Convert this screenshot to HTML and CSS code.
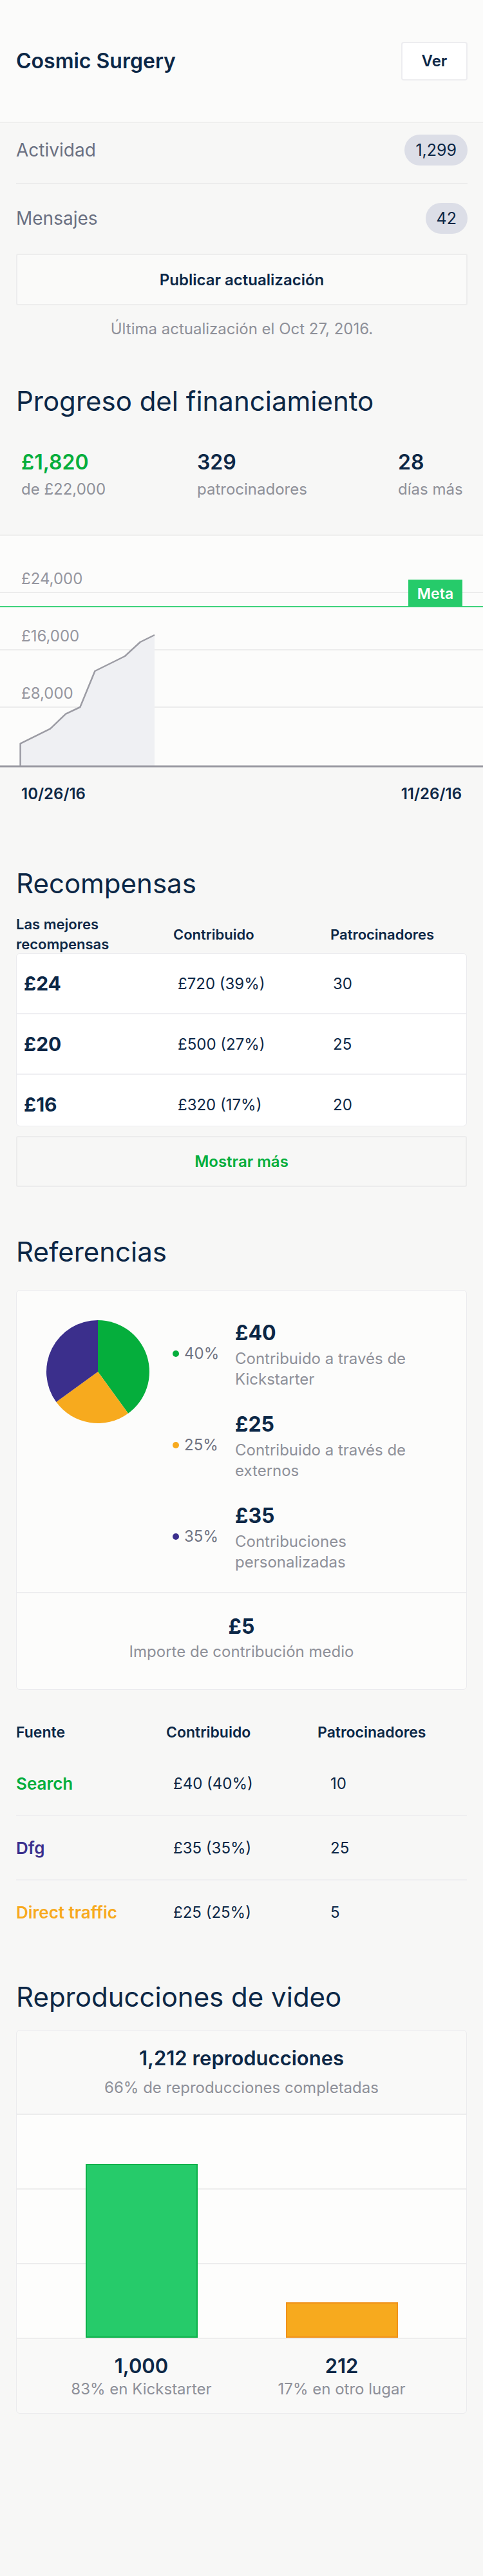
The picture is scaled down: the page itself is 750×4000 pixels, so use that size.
FILE: index.html
```html
<!DOCTYPE html>
<html lang="es">
<head>
<meta charset="utf-8">
<title>Cosmic Surgery</title>
<link rel="stylesheet" href="styles.css">
</head>
<body>
<header class="top">
  <h1 class="title">Cosmic Surgery</h1>
  <button class="btn-ver">Ver</button>
</header>

<section class="summary">
  <div class="stat stat-first"><span class="stat-label">Actividad</span><span class="badge">1,299</span></div>
  <div class="stat stat-second"><span class="stat-label">Mensajes</span><span class="badge">42</span></div>
  <button class="btn-wide">Publicar actualización</button>
  <p class="updated">Última actualización el Oct 27, 2016.</p>
</section>

<h2 class="section-title t-progress">Progreso del financiamiento</h2>
<div class="funding-stats">
  <div><div class="fs-value green">£1,820</div><div class="fs-label">de £22,000</div></div>
  <div><div class="fs-value">329</div><div class="fs-label">patrocinadores</div></div>
  <div><div class="fs-value">28</div><div class="fs-label">días más</div></div>
</div>
<div class="funding-chart">
  <svg class="chart-svg" width="750" height="360" viewBox="0 0 750 360">
    <line x1="0" y1="88" x2="750" y2="88" class="grid"/>
    <line x1="0" y1="177" x2="750" y2="177" class="grid"/>
    <line x1="0" y1="266" x2="750" y2="266" class="grid"/>
    <polygon points="31.6,358 31.6,322.6 78,299.6 102,276.6 124.4,266 147.4,210 193.8,187 217.7,165 240,154 240,358" class="area"/>
    <polyline points="31.6,358 31.6,322.6 78,299.6 102,276.6 124.4,266 147.4,210 193.8,187 217.7,165 240,154" class="area-line"/>
    <line x1="0" y1="110" x2="750" y2="110" class="goal"/>
    <rect x="634" y="68" width="84" height="42" class="goal-box"/>
    <text x="676" y="98" text-anchor="middle" class="goal-text">Meta</text>
    <text x="33" y="75" class="axis-label">£24,000</text>
    <text x="33" y="164" class="axis-label">£16,000</text>
    <text x="33" y="253" class="axis-label">£8,000</text>
    <line x1="0" y1="358" x2="750" y2="358" class="axis"/>
  </svg>
</div>
<div class="dates"><span>10/26/16</span><span>11/26/16</span></div>

<h2 class="section-title t-rewards">Recompensas</h2>
<div class="rewards-head">
  <div>Las mejores<br>recompensas</div>
  <div>Contribuido</div>
  <div>Patrocinadores</div>
</div>
<div class="rewards-card">
  <div class="reward-row"><span class="reward-amt">£24</span><span class="reward-val">£720 (39%)</span><span class="reward-val">30</span></div>
  <div class="reward-row"><span class="reward-amt">£20</span><span class="reward-val">£500 (27%)</span><span class="reward-val">25</span></div>
  <div class="reward-row"><span class="reward-amt">£16</span><span class="reward-val">£320 (17%)</span><span class="reward-val">20</span></div>
</div>
<div class="wrap"><button class="btn-more">Mostrar más</button></div>

<h2 class="section-title t-refs">Referencias</h2>
<div class="ref-card">
  <div class="ref-top">
    <svg class="pie" width="160" height="160" viewBox="0 0 160 160">
      <path d="M80,80 L80,0 A80,80 0 0 1 127.02,144.72 Z" fill="#05ae3c"/>
      <path d="M80,80 L127.02,144.72 A80,80 0 0 1 15.28,127.02 Z" fill="#f7aa1e"/>
      <path d="M80,80 L15.28,127.02 A80,80 0 0 1 80,0 Z" fill="#3b2f8c"/>
    </svg>
    <div class="legend">
      <div class="legend-item">
        <div class="legend-pct"><span class="dot dot-green"></span>40%</div>
        <div class="legend-text"><div class="legend-amt">£40</div><div class="legend-desc">Contribuido a través de Kickstarter</div></div>
      </div>
      <div class="legend-item">
        <div class="legend-pct"><span class="dot dot-orange"></span>25%</div>
        <div class="legend-text"><div class="legend-amt">£25</div><div class="legend-desc">Contribuido a través de externos</div></div>
      </div>
      <div class="legend-item">
        <div class="legend-pct"><span class="dot dot-purple"></span>35%</div>
        <div class="legend-text"><div class="legend-amt">£35</div><div class="legend-desc">Contribuciones personalizadas</div></div>
      </div>
    </div>
  </div>
  <div class="ref-bottom">
    <div class="legend-amt">£5</div>
    <div class="legend-desc">Importe de contribución medio</div>
  </div>
</div>

<div class="src-head">
  <div>Fuente</div>
  <div>Contribuido</div>
  <div>Patrocinadores</div>
</div>
<div class="src-table">
  <div class="src-row"><span class="src-name green">Search</span><span class="src-val">£40 (40%)</span><span class="src-val">10</span></div>
  <div class="src-row"><span class="src-name purple">Dfg</span><span class="src-val">£35 (35%)</span><span class="src-val">25</span></div>
  <div class="src-row"><span class="src-name orange">Direct traffic</span><span class="src-val">£25 (25%)</span><span class="src-val">5</span></div>
</div>

<h2 class="section-title t-video">Reproducciones de video</h2>
<div class="video-card">
  <div class="video-head">
    <div class="video-total">1,212 reproducciones</div>
    <div class="video-sub">66% de reproducciones completadas</div>
  </div>
  <div class="video-chart">
    <div class="band"><div class="bar bar-green" style="height:270px"></div></div>
    <div class="band"><div class="bar bar-orange" style="height:55px"></div></div>
  </div>
  <div class="video-foot">
    <div class="band-label"><div class="vf-num">1,000</div><div class="vf-label">83% en Kickstarter</div></div>
    <div class="band-label"><div class="vf-num">212</div><div class="vf-label">17% en otro lugar</div></div>
  </div>
</div>
</body>
</html>
```

FILE: styles.css
```css
* { box-sizing: border-box; }
html { background: #f7f7f6; }
body {
  margin: 0;
  background: #f7f7f6;
  font-family: Inter, "Noto Sans", sans-serif;
  color: #0c2746;
  min-height: 4000px;
}
button { font-family: inherit; cursor: pointer; }

.green { color: #05ae3c; }
.purple { color: #3b2f8c; }
.orange { color: #f7aa1e; }

/* header */
.top {
  height: 191px;
  background: #fbfbfa;
  border-bottom: 2px solid #efefee;
  display: flex;
  align-items: center;
  justify-content: space-between;
  padding: 0 24px 0 25px;
}
.title { margin: 0; font-size: 32px; font-weight: 600; line-height: 40px; }
.btn-ver {
  width: 103px; height: 60px;
  background: #fff;
  border: 2px solid #ededf0;
  border-radius: 4px;
  font-size: 24px; font-weight: 600;
  color: #0c2746;
}

/* summary */
.summary { padding: 18px 24px 0 25px; }
.stat { display: flex; justify-content: space-between; align-items: center; }
.stat-first { padding-bottom: 27px; border-bottom: 2px solid #ececec; }
.stat-second { padding-top: 29px; padding-bottom: 31px; }
.stat-label { font-size: 28px; line-height: 48px; color: #6a7082; }
.badge {
  height: 48px; line-height: 48px;
  padding: 0 17px;
  border-radius: 24px;
  background: #dcdee7;
  font-size: 25px;
  color: #0c2746;
}
.btn-wide {
  display: block; width: 100%; height: 80px;
  background: #fafaf9;
  border: 2px solid #ededed;
  border-radius: 3px;
  font-size: 24px; font-weight: 600;
  color: #0c2746;
}
.updated { margin: 21px 0 0; text-align: center; font-size: 24px; line-height: 32px; color: #8e9099; }

/* section titles */
.section-title { margin: 0; padding: 0 25px; font-size: 42px; font-weight: 400; line-height: 50px; }
.t-progress { margin-top: 71px; }
.t-rewards { margin-top: 98px; }
.t-refs { margin-top: 76px; }
.t-video { margin-top: 58px; }

/* funding */
.funding-stats {
  display: grid;
  grid-template-columns: 273px 312px 1fr;
  padding-left: 33px;
  margin-top: 50px;
}
.fs-value { font-size: 32px; font-weight: 600; line-height: 40px; }
.fs-label { font-size: 24px; line-height: 32px; color: #8e9099; margin-top: 6px; }
.funding-chart { margin-top: 54px; border-top: 2px solid #efefee; background: #fcfcfb; }
.chart-svg { display: block; }
.grid { stroke: #ececec; stroke-width: 2; }
.area { fill: #eff0f3; }
.area-line { fill: none; stroke: #9c9ca4; stroke-width: 2.5; stroke-linejoin: round; }
.goal { stroke: #3fd27c; stroke-width: 2; }
.goal-box { fill: #26cb6a; }
.goal-text { font-family: Inter, sans-serif; font-size: 23px; font-weight: 600; fill: #fff; }
.axis-label { font-family: Inter, sans-serif; font-size: 24px; fill: #95969f; }
.axis { stroke: #9a9aa2; stroke-width: 3; }
.dates {
  display: flex; justify-content: space-between;
  padding: 0 33px;
  margin-top: 25px;
  font-size: 24px; font-weight: 600; line-height: 32px;
}

/* rewards */
.rewards-head {
  margin-top: 23px;
  height: 60px;
  padding: 0 25px;
  display: grid;
  grid-template-columns: 244px 244px 1fr;
  align-items: center;
  font-size: 22px; font-weight: 600; line-height: 31px;
}
.rewards-card {
  margin: 0 25px;
  height: 269px;
  overflow: hidden;
  background: #fff;
  border: 1px solid #ebebee;
  border-radius: 6px;
}
.reward-row {
  height: 92px;
  display: grid;
  grid-template-columns: 239px 241px 1fr;
  align-items: center;
  padding-left: 11px;
}
.reward-row + .reward-row { height: 94px; border-top: 2px solid #efeff2; }
.reward-amt { font-size: 30px; font-weight: 700; }
.reward-val { font-size: 24px; }
.wrap { padding: 0 25px; }
.btn-more {
  display: block; width: 100%; height: 79px;
  margin-top: 15px;
  background: #f7f7f6;
  border: 2px solid #ececec;
  border-radius: 3px;
  font-size: 24px; font-weight: 600;
  color: #05ae3c;
}

/* referrals */
.ref-card {
  margin: 34px 25px 0;
  background: #fcfcfb;
  border: 1px solid #ebebee;
  border-radius: 6px;
}
.ref-top { display: flex; align-items: flex-start; padding: 41px 0 30px; }
.pie { display: block; margin: 5px 0 0 46px; flex: none; }
.legend { margin-left: 36px; display: flex; flex-direction: column; gap: 29px; }
.legend-item { display: flex; align-items: center; }
.legend-pct { width: 97px; display: flex; align-items: center; gap: 8px; font-size: 24px; color: #6f7382; flex: none; }
.dot { width: 10px; height: 10px; border-radius: 50%; }
.dot-green { background: #05ae3c; }
.dot-orange { background: #f7aa1e; }
.dot-purple { background: #3b2f8c; }
.legend-text { width: 300px; }
.legend-amt { font-size: 32px; font-weight: 700; line-height: 49px; }
.legend-desc { font-size: 24px; line-height: 32px; color: #8e9099; }
.ref-bottom { border-top: 2px solid #eeeeef; padding: 29px 0 42px; text-align: center; }
.ref-bottom .legend-amt { line-height: 46px; }

/* sources */
.src-head {
  margin-top: 50px;
  padding: 0 25px 14px;
  display: grid;
  grid-template-columns: 233px 235px 1fr;
  font-size: 23px; font-weight: 600; line-height: 32px;
}
.src-table { padding: 0 25px; }
.src-row {
  height: 100px;
  display: grid;
  grid-template-columns: 244px 244px 1fr;
  align-items: center;
  border-bottom: 2px solid #efeff1;
}
.src-row:last-child { height: 98px; border-bottom: 0; }
.src-name { font-size: 26px; font-weight: 600; }
.src-val { font-size: 24px; }

/* video */
.video-card {
  margin: 26px 25px 0;
  background: #f9f9f8;
  border: 1px solid #ebebee;
  border-radius: 6px;
  overflow: hidden;
}
.video-head { padding: 23px 0 24px; text-align: center; }
.video-total { font-size: 31px; font-weight: 600; line-height: 40px; }
.video-sub { margin-top: 10px; font-size: 24px; line-height: 32px; color: #8e9099; }
.video-chart {
  height: 350px;
  display: flex;
  align-items: flex-end;
  padding: 0 38px 2px;
  background-color: #fdfdfc;
  background-image: repeating-linear-gradient(to bottom, #ededed 0, #ededed 2px, transparent 2px, transparent 116px);
}
.band { flex: 1; display: flex; justify-content: center; align-items: flex-end; height: 100%; }
.bar { width: 174px; }
.bar-green { background: #26cb6a; border: 2px solid #0db14a; }
.bar-orange { background: #f7aa1e; border: 2px solid #f0921b; }
.video-foot { display: flex; padding: 22px 38px 21px; }
.band-label { flex: 1; text-align: center; }
.vf-num { font-size: 31px; font-weight: 600; line-height: 40px; }
.vf-label { font-size: 24px; line-height: 32px; color: #8e9099; }
```
